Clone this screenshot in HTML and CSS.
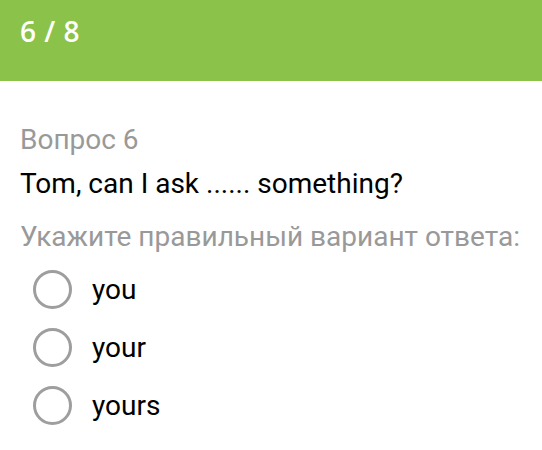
FILE: index.html
```html
<!DOCTYPE html>
<html lang="ru">
<head>
<meta charset="utf-8">
<link rel="stylesheet" href="styles.css">
</head>
<body>
<header class="bar"><span class="counter">6 / 8</span></header>
<main class="content">
  <div class="label">Вопрос 6</div>
  <div class="question">Tom, can I ask ...... something?</div>
  <div class="hint">Укажите правильный вариант ответа:</div>
  <ul class="options">
    <li class="option"><span class="radio"></span><span class="opt-text">you</span></li>
    <li class="option"><span class="radio"></span><span class="opt-text">your</span></li>
    <li class="option"><span class="radio"></span><span class="opt-text">yours</span></li>
  </ul>
</main>
</body>
</html>
```
FILE: styles.css
```css
html, body { margin: 0; padding: 0; background: #fff; }
body { font-family: Roboto, "Liberation Sans", sans-serif; }
.bar {
  height: 81px;
  background: #8bc34a;
  padding: 17px 20px 0;
  box-sizing: border-box;
}
.counter {
  display: block;
  color: #fff;
  font-family: "Open Sans", sans-serif;
  font-weight: 600;
  font-size: 28px;
  line-height: 28px;
  letter-spacing: 0.5px;
}
.content { padding: 42px 20px 0; }
.label { color: #999; font-size: 28px; line-height: 33px; }
.question { color: #000; font-size: 28px; line-height: 33px; margin-top: 11px; }
.hint { color: #999; font-size: 28px; line-height: 33px; margin-top: 20px; }
.options { list-style: none; margin: 7px 0 0; padding: 0 0 0 13px; }
.option { display: flex; align-items: center; height: 58px; }
.radio {
  width: 39px; height: 39px; box-sizing: border-box;
  border: 3px solid #9e9e9e; border-radius: 50%;
  flex: none;
}
.opt-text { margin-left: 20px; font-size: 28px; line-height: 33px; color: #000; }
```
